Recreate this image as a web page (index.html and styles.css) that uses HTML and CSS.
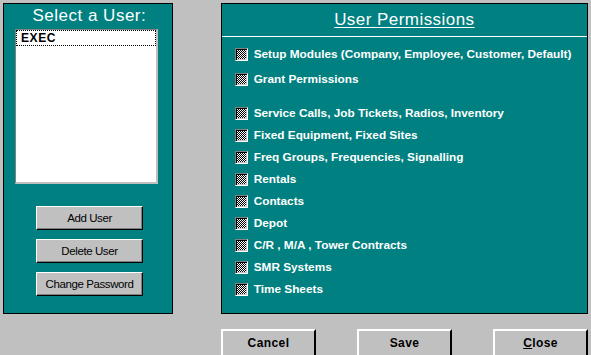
FILE: index.html
```html
<!DOCTYPE html>
<html>
<head>
<meta charset="utf-8">
<link rel="stylesheet" href="styles.css">
</head>
<body>
<div class="window">
  <div class="top">
    <div class="panel users">
      <div class="users-title">Select a User:</div>
      <div class="listbox">
        <div class="list-item">EXEC</div>
      </div>
      <div class="user-buttons">
        <div class="btn small">Add User</div>
        <div class="btn small">Delete User</div>
        <div class="btn small">Change Password</div>
      </div>
    </div>
    <div class="panel perms">
      <div class="perms-head"><span class="perms-title">User Permissions</span></div>
      <div class="perm-list">
        <div class="perm"><span class="chk"></span><span class="lbl">Setup Modules (Company, Employee, Customer, Default)</span></div>
        <div class="perm grant"><span class="chk"></span><span class="lbl">Grant Permissions</span></div>
        <div class="perm service"><span class="chk"></span><span class="lbl">Service Calls, Job Tickets, Radios, Inventory</span></div>
        <div class="perm"><span class="chk"></span><span class="lbl">Fixed Equipment, Fixed Sites</span></div>
        <div class="perm"><span class="chk"></span><span class="lbl">Freq Groups, Frequencies, Signalling</span></div>
        <div class="perm"><span class="chk"></span><span class="lbl">Rentals</span></div>
        <div class="perm"><span class="chk"></span><span class="lbl">Contacts</span></div>
        <div class="perm"><span class="chk"></span><span class="lbl">Depot</span></div>
        <div class="perm"><span class="chk"></span><span class="lbl">C/R , M/A , Tower Contracts</span></div>
        <div class="perm"><span class="chk"></span><span class="lbl">SMR Systems</span></div>
        <div class="perm"><span class="chk"></span><span class="lbl">Time Sheets</span></div>
      </div>
    </div>
  </div>
  <div class="bottom">
    <div class="btn big">Cancel</div>
    <div class="btn big">Save</div>
    <div class="btn big"><u>C</u>lose</div>
  </div>
</div>
</body>
</html>
```
FILE: styles.css
```css
html, body {
  margin: 0;
  padding: 0;
  background: #c0c0c0;
  width: 591px;
  height: 355px;
  overflow: hidden;
  font-family: "Liberation Sans", Arial, sans-serif;
}
.window {
  padding: 3px 3px 0 3px;
}
.top {
  display: flex;
  gap: 48px;
}
.panel {
  background: #008080;
  border: 1px solid #000;
  box-sizing: border-box;
  height: 311px;
}
.users {
  width: 170px;
  display: flex;
  flex-direction: column;
}
.users-title {
  color: #fff;
  font-size: 17px;
  letter-spacing: 0.5px;
  text-align: center;
  height: 25px;
  line-height: 24px;
  padding-left: 3px;
}
.listbox {
  margin-left: 11px;
  width: 143px;
  height: 155px;
  box-sizing: border-box;
  background: #fff;
  border-top: 1px solid #808080;
  border-left: 1px solid #808080;
  border-right: 2px solid #c0c0c0;
  border-bottom: 2px solid #c0c0c0;
}
.list-item {
  height: 14px;
  border: 1px dotted #000;
  font-weight: bold;
  font-size: 12px;
  line-height: 14px;
  letter-spacing: 0.6px;
  padding-left: 4px;
  color: #000;
}
.user-buttons {
  display: flex;
  flex-direction: column;
  gap: 9px;
  margin-top: 22px;
  margin-left: 32px;
}
.btn {
  background: #c0c0c0;
  box-sizing: border-box;
  border-top: 1px solid #fff;
  border-left: 1px solid #fff;
  border-right: 1px solid #000;
  border-bottom: 1px solid #000;
  box-shadow: inset -1px -1px 0 #808080;
  color: #000;
  display: flex;
  align-items: center;
  justify-content: center;
  white-space: nowrap;
}
.small {
  width: 107px;
  height: 24px;
  font-size: 11.5px;
  letter-spacing: -0.4px;
}
.perms {
  width: 368px;
}
.perms-head {
  height: 33px;
  border-bottom: 1px solid #fff;
  box-sizing: border-box;
  display: flex;
  justify-content: center;
  align-items: center;
}
.perms-title {
  color: #fff;
  font-size: 17px;
  letter-spacing: 0.45px;
  text-decoration: underline;
  text-underline-offset: 2px;
  margin-top: -1px;
}
.perm-list {
  padding: 6px 0 0 13px;
}
.perm {
  display: flex;
  align-items: center;
  height: 22px;
}
.perm.grant { margin-top: 3px; }
.perm.service { margin-top: 12px; }
.chk {
  width: 13px;
  height: 13px;
  box-sizing: border-box;
  border-top: 1px solid #808080;
  border-left: 1px solid #808080;
  border-right: 1px solid #fff;
  border-bottom: 1px solid #fff;
  box-shadow: inset 1px 1px 0 #000, inset -1px -1px 0 #c0c0c0;
  background: repeating-conic-gradient(#000 0 25%, #fff 0 50%) 0 0 / 2px 2px;
  flex: none;
}
.lbl {
  color: #fff;
  font-weight: bold;
  font-size: 11.8px;
  letter-spacing: 0;
  margin-left: 6px;
  white-space: nowrap;
}
.bottom {
  display: flex;
  gap: 41px;
  margin-top: 15px;
  margin-left: 218px;
}
.big {
  width: 95px;
  height: 28px;
  font-weight: bold;
  font-size: 12px;
  letter-spacing: 0.4px;
  border-top: 2px solid #fff;
  border-left: 2px solid #fff;
  border-right: 2px solid #000;
  border-bottom: 2px solid #000;
  box-shadow: none;
}
```
